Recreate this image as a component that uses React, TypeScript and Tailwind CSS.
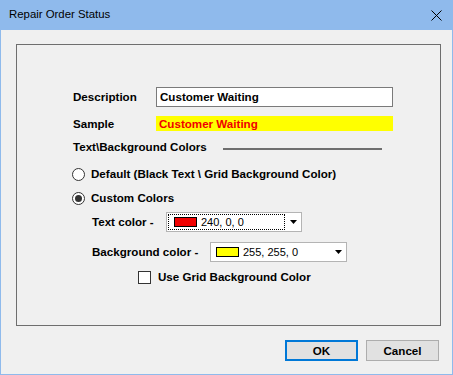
import { useState } from 'react';

const font = "font-['Liberation_Sans',Arial,sans-serif]";

function Radio({ checked }: { checked: boolean }) {
    return (
        <span className="w-[13px] h-[13px] rounded-full border border-[#333333] bg-white flex items-center justify-center shrink-0">
            {checked && <span className="w-[7px] h-[7px] rounded-full bg-[#333333]" />}
        </span>
    );
}

function ColorCombo({ color, value, width, focused }: { color: string; value: string; width: string; focused?: boolean }) {
    return (
        <div className={`${width} h-[20px] bg-white border border-[#b4b4b4] flex items-center font-normal`}>
            <div className={`flex-1 flex items-center pl-[5px] ${focused ? 'border border-dotted border-black ml-[1px] h-[16px] pl-[4px]' : 'h-full'}`}>
                <span className="w-[23px] h-[10px] border border-black shrink-0" style={{ backgroundColor: color }} />
                <span className="ml-[4px] text-[11px] text-black leading-none">{value}</span>
            </div>
            <div className="w-[16px] h-full flex items-center justify-center">
                <svg width="7" height="4" viewBox="0 0 7 4">
                    <path d="M0 0 H7 L3.5 4 Z" fill="#000" />
                </svg>
            </div>
        </div>
    );
}

export default function App() {
    const [custom, setCustom] = useState(true);
    const [useGrid, setUseGrid] = useState(false);

    return (
        <div className={`w-[453px] h-[375px] flex flex-col bg-[#f0f0f0] ${font}`}>
            {/* Title bar */}
            <div className="h-[30px] bg-[#8fbaec] flex items-center justify-between pl-[9px] pr-[10px] shrink-0">
                <span className="text-[11.4px] text-black">Repair Order Status</span>
                <svg width="11" height="11" viewBox="0 0 11 11" className="mr-[1px]">
                    <path d="M0.5 0.5 L10.5 10.5 M10.5 0.5 L0.5 10.5" stroke="#000" strokeWidth="1" />
                </svg>
            </div>

            {/* Body */}
            <div className="flex-1 flex flex-col border-x border-b border-[#8fbaec] pt-[14px] pl-[15px] pr-[11px]">
                {/* Group box */}
                <div className="w-[425px] h-[282px] border border-[#6e6e6e] flex flex-col text-[11.6px] font-bold text-black">
                    {/* Description */}
                    <div className="mt-[42px] h-[20px] flex items-center pl-[56px]">
                        <span className="w-[83px]">Description</span>
                        <div className="w-[237px] h-[20px] bg-white border border-[#7a7a7a] flex items-center pl-[3px]">
                            Customer Waiting
                        </div>
                    </div>

                    {/* Sample */}
                    <div className="mt-[9px] h-[15px] flex items-center pl-[56px]">
                        <span className="w-[83px]">Sample</span>
                        <div className="w-[237px] h-[15px] bg-[#ffff00] text-[#f00000] flex items-center pl-[3px]">
                            Customer Waiting
                        </div>
                    </div>

                    {/* Section header */}
                    <div className="mt-[9px] h-[14px] flex items-center pl-[56px]">
                        <span className="w-[150px]">Text\Background Colors</span>
                        <div className="w-[159px] h-[2px] bg-[#6e6e6e] mt-[3px]" />
                    </div>

                    {/* Radios */}
                    <div className="mt-[12px] h-[16px] flex items-center pl-[55px] gap-[6px] cursor-default" onClick={() => setCustom(false)}>
                        <Radio checked={!custom} />
                        <span>Default (Black Text \ Grid Background Color)</span>
                    </div>
                    <div className="mt-[8px] h-[16px] flex items-center pl-[55px] gap-[6px] cursor-default" onClick={() => setCustom(true)}>
                        <Radio checked={custom} />
                        <span>Custom Colors</span>
                    </div>

                    {/* Text color */}
                    <div className="mt-[6px] h-[20px] flex items-center pl-[75px]">
                        <span className="w-[74px]">Text color -</span>
                        <ColorCombo color="#f00000" value="240, 0, 0" width="w-[136px]" focused />
                    </div>

                    {/* Background color */}
                    <div className="mt-[10px] h-[20px] flex items-center pl-[75px]">
                        <span className="w-[118px]">Background color -</span>
                        <ColorCombo color="#ffff00" value="255, 255, 0" width="w-[137px]" />
                    </div>

                    {/* Checkbox */}
                    <div className="mt-[7px] h-[16px] flex items-center pl-[121px] gap-[7px] cursor-default" onClick={() => setUseGrid(!useGrid)}>
                        <span className="w-[13px] h-[13px] border border-[#333333] bg-white flex items-center justify-center">
                            {useGrid && <span className="text-[10px] leading-none">✓</span>}
                        </span>
                        <span>Use Grid Background Color</span>
                    </div>
                </div>

                {/* Buttons */}
                <div className="mt-[14px] flex justify-end gap-[8px] pr-[2px] text-[11.6px] font-bold text-black">
                    <button className="w-[73px] h-[21px] bg-[#e1e1e1] border-2 border-[#0078d7] flex items-center justify-center">OK</button>
                    <button className="w-[73px] h-[21px] bg-[#e1e1e1] border border-[#adadad] flex items-center justify-center">Cancel</button>
                </div>
            </div>
        </div>
    );
}
